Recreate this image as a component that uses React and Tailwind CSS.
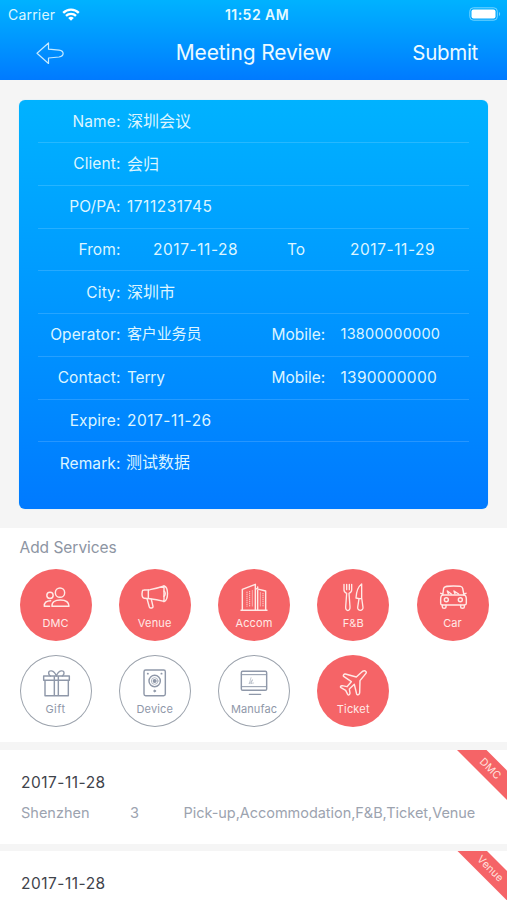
import React from "react";

const glyph = {
  fill: "none",
  stroke: "currentColor",
  strokeLinecap: "round",
  strokeLinejoin: "round",
};

function Glyph({ box, children, width = 4.3 }) {
  return (
    <svg viewBox={box} className="block size-[30px]" {...glyph} strokeWidth={width}>
      {children}
    </svg>
  );
}

const icons = {
  DMC: (
    <Glyph box="120 159 90 90">
      <circle cx="177" cy="188" r="14" />
      <circle cx="147" cy="196" r="9.500" />
      <path d="M153 229c-1-13 9-19 25-19s26 6 26 19z" />
      <path d="M146 229h-16c-1-11 6-17 19-17" />
    </Glyph>
  ),
  Venue: (
    <Glyph box="420 159 90 90">
      <path d="M427 184c0-3 2-4 5-4l18-1c12-2 27-6 42-11v46c-14-4-28-7-42-8l-17-1c-5-1-7-7-7-13z" />
      <path d="M445 180v25M441 206l7 25c2 5 12 4 11-2l-5-21" />
      <path d="M492 168c14 3 14 42 0 47M492 183c5 3 5 12 0 16" />
    </Glyph>
  ),
  Accom: (
    <Glyph box="117 159 90 90">
      <path d="M123 241h78M127 240v-62l39-15v77M168 176l29 7v57M173 171v68" />
      <path d="M141 185v45M149 183v47M157 181v49M181 187v43M189 189v41" strokeWidth="2.500" strokeDasharray="4 2" strokeLinecap="butt" />
    </Glyph>
  ),
  "F&B": (
    <Glyph box="414 159 90 90" width={4}>
      <path d="M432 163v17c0 5 3 8 8 10l-3 41c-1 14 14 14 13 0l-3-41c5-2 8-5 8-10v-17M440 163v16M448 163v16" />
      <path d="M485 162c-11 8-16 23-17 42l9 2-4 26c-1 12 17 12 16 0l-4-28zM477 206l7-1" />
    </Glyph>
  ),
  Car: (
    <Glyph box="142 159 90 90">
      <path d="M156 195l3-20c1-6 7-7 29-7s27 1 28 7l4 20" />
      <path d="M156 195h64c6 1 7 6 7 13v12c0 4-2 5-5 5h-68c-3 0-4-2-4-5v-12c0-7 1-12 6-13z" />
      <path d="M150 190l6 2M226 190l-6 2M155 226v5c0 5 11 5 11 0v-5M210 226v5c0 5 11 5 11 0v-5" />
      <circle cx="167" cy="209" r="6" />
      <circle cx="209" cy="209" r="6" />
      <path d="M170 183l12 9M190 183l14 9M170 183l3 8M190 183l3 8" />
    </Glyph>
  ),
  Gift: (
    <Glyph box="120 417 90 90">
      <path d="M128 438h77v13h-77zM132 451v46h70v-46M160 439v58M172 439v58" />
      <path d="M166 438c-7-19-24-19-23-8 0 4 2 6 5 8M166 438c7-19 24-19 23-8 0 4-2 6-5 8" />
    </Glyph>
  ),
  Device: (
    <Glyph box="420 417 90 90">
      <rect x="432" y="420" width="64" height="77" rx="5" />
      <circle cx="464" cy="453" r="17" />
      <circle cx="464" cy="453" r="10" strokeWidth="2" />
      <circle cx="464" cy="453" r="4" fill="currentColor" />
      <circle cx="464" cy="483" r="3" fill="currentColor" strokeWidth="2" />
      <path d="M443 431h1M484 431h1" strokeWidth="5" />
    </Glyph>
  ),
  Manufac: (
    <Glyph box="117 417 90 90">
      <rect x="124" y="424" width="76" height="57" rx="4" />
      <path d="M124 434h76M124 470h76" strokeWidth="3" />
      <path d="M148 493h34" strokeWidth="4" />
      <path d="M153 443l-5 18M148 460l9-9M153 460l8-1M157 449l-4 12" strokeWidth="1.500" />
    </Glyph>
  ),
  Ticket: (
    <Glyph box="414 417 90 90">
      <path d="M497 424c-4-4-10 0-15 5l-13 12-33-9c-4-1-8 5-5 7l23 16-13 15-15-3c-4 0-6 4-3 6l14 8 6 12c3 4 7 0 7-4l-2-12 15-14 7 29c2 5 9 1 9-4l1-36 13-16c5-5 8-9 4-12z" />
    </Glyph>
  ),
};

const services = [
  ["DMC", true, "tracking-[0.1px]"],
  ["Venue", true, "tracking-[0.2px]"],
  ["Accom", true, "tracking-[0.1px]"],
  ["F&B", true, "tracking-[0.1px]"],
  ["Car", true, "tracking-[0.1px]"],
  ["Gift", false, "tracking-[0.5px]"],
  ["Device", false, "tracking-[0.15px]"],
  ["Manufac", false, "tracking-[0.1px]"],
  ["Ticket", true, "tracking-[0.2px]"],
];

function Service({ name, active, tracking }) {
  return (
    <div
      className={
        "flex size-[72px] flex-col items-center rounded-full " +
        (active ? "bg-[#f56467] text-[#ffe9e6]" : "text-[#8f98a9] shadow-[inset_0_0_0_1px_#9ba2ac]")
      }
    >
      <div className="mt-[14px]">{icons[name]}</div>
      <span className={"mt-[3px] text-[11px] leading-[14px] " + tracking}>{name}</span>
    </div>
  );
}

function Row({ label, last, children }) {
  return (
    <div className={"flex h-[42.75px] items-center border-b " + (last ? "border-transparent" : "border-white/15")}>
      <span className="w-[82.500px] shrink-0 text-right tracking-[0.1px]">{label}</span>
      {children}
    </div>
  );
}

function Mobile({ children }) {
  return (
    <>
      <span className="w-[69px] shrink-0">Mobile:</span>
      {children}
    </>
  );
}

function Booking({ tag, children }) {
  return (
    <div className="relative h-[93.500px] bg-white pl-[21px] pt-[22px]">
      <div className="text-[15.500px] leading-[22px] tracking-[0.5px] text-[#3f434b]">2017-11-28</div>
      {children}
      <div className="absolute right-0 top-0 size-[50px] bg-[#f56467] [clip-path:polygon(0_0,59%_0,100%_41%,100%_100%)]">
        <span className="absolute left-[7.500px] top-[11.500px] w-[50px] rotate-45 text-center text-[10.500px] leading-[14px] tracking-[0.1px] text-[#ffe1de]">
          {tag}
        </span>
      </div>
    </div>
  );
}

export default function App() {
  return (
    <div className="h-[900px] w-[507px] overflow-hidden bg-[#f5f5f5] font-['Inter','Noto_Sans_CJK_SC',sans-serif]">
      <header className="h-[79.500px] bg-linear-to-b from-[#00b2ff] to-[#007aff] text-white">
        <div className="grid h-[28px] grid-cols-[1fr_auto_1fr] items-center pl-[8px] pr-[4px] text-[14px]">
          <div className="flex items-center gap-[7px] text-[#d9f7ff]">
            <span className="tracking-[0.2px]">Carrier</span>
            <svg viewBox="0 0 18 13" className="h-[13px] w-[18px]" fill="none" stroke="white" strokeWidth="2.300">
              <path d="M1.200 4.900a11 11 0 0 1 15.600 0M4 7.900a7 7 0 0 1 10 0" />
              <path d="M6.200 10a4 4 0 0 1 5.600 0L9 12.800z" fill="white" stroke="none" />
            </svg>
          </div>
          <span className="pl-[3px] text-[14px] font-semibold tracking-[0.45px] text-[#e5faff]">11:52 AM</span>
          <svg viewBox="0 0 32 14" className="mr-[2px] h-[14px] w-[32px] justify-self-end" fill="none">
            <rect x="0.800" y="0.800" width="27.500" height="12.400" rx="3.500" stroke="#75d5ff" />
            <rect x="2.500" y="2.500" width="24" height="9" rx="2" fill="white" />
            <path d="M30 5c1.500.8 1.500 3.200 0 4z" fill="#75d5ff" />
          </svg>
        </div>
        <div className="grid h-[50px] grid-cols-[1fr_auto_1fr] items-center pl-[36px] pr-[36px] text-[21px] text-[#ecfaff]">
          <svg viewBox="0 0 28 22" className="h-[22px] w-[28px]" fill="none" stroke="#c5eaff" strokeWidth="1.200" strokeLinejoin="round">
            <path d="M1 11.300L12.500 1v6.200l10.500 1c5.500.7 5.500 6 0 6.800l-10.500 1v5.500z" />
          </svg>
          <span className="tracking-[-0.15px]">Meeting Review</span>
          <span className="-mr-[7px] justify-self-end text-[20.500px] tracking-[-0.3px]">Submit</span>
        </div>
      </header>

      <section className="mx-[19px] mb-[19px] mt-[20px] h-[409px] rounded-[6px] bg-linear-to-b from-[#00b2ff] to-[#007aff] px-[19px] pt-[0.75px] text-[15.500px] text-[#dcf5ff] shadow-[0_0_1px_#80d8ff]">
        <Row label="Name:">
          <span className="ml-[6.500px] text-[16px]">深圳会议</span>
        </Row>
        <Row label="Client:">
          <span className="ml-[6.500px] text-[16px]">会归</span>
        </Row>
        <Row label="PO/PA:">
          <span className="ml-[6.500px] tracking-[0.5px]">1711231745</span>
        </Row>
        <Row label="From:">
          <span className="ml-[32.500px] w-[134px] tracking-[0.55px]">2017-11-28</span>
          <span className="w-[63px]">To</span>
          <span className="tracking-[0.55px]">2017-11-29</span>
        </Row>
        <Row label="City:">
          <span className="ml-[6.500px] text-[16px]">深圳市</span>
        </Row>
        <Row label="Operator:">
          <span className="ml-[6.500px] w-[144.500px] pb-[2px] text-[15px] tracking-[-0.15px]">客户业务员</span>
          <Mobile>
            <span className="pb-[2px] text-[14.500px] tracking-[0.25px]">13800000000</span>
          </Mobile>
        </Row>
        <Row label="Contact:">
          <span className="ml-[6.500px] w-[144.500px] tracking-[-0.2px]">Terry</span>
          <Mobile>
            <span className="tracking-[0.25px]">1390000000</span>
          </Mobile>
        </Row>
        <Row label="Expire:">
          <span className="ml-[6.500px] tracking-[0.5px]">2017-11-26</span>
        </Row>
        <Row label="Remark:" last>
          <span className="ml-[5.500px] pb-[2px] text-[16px]">测试数据</span>
        </Row>
      </section>

      <section className="h-[214.500px] bg-white pl-[19.500px] pr-[18.500px] pt-[9px]">
        <h2 className="text-[15.500px] leading-[22px] tracking-[-0.03px] text-[#8d95a3]">Add Services</h2>
        <div className="mt-[10px] grid grid-cols-[repeat(5,72px)] justify-between gap-y-[14px]">
          {services.map(([name, active, tracking]) => (
            <Service key={name} name={name} active={active} tracking={tracking} />
          ))}
        </div>
      </section>

      <section className="mt-[8px] flex flex-col gap-[7px]">
        <Booking tag="DMC">
          <div className="mt-[8px] flex text-[14.500px] leading-[22px] text-[#9ca3af]">
            <span className="w-[109px]">Shenzhen</span>
            <span className="w-[53.500px]">3</span>
            <span className="whitespace-nowrap tracking-[-0.04px]">Pick-up,Accommodation,F&amp;B,Ticket,Venue</span>
          </div>
        </Booking>
        <Booking tag="Venue" />
      </section>
    </div>
  );
}
